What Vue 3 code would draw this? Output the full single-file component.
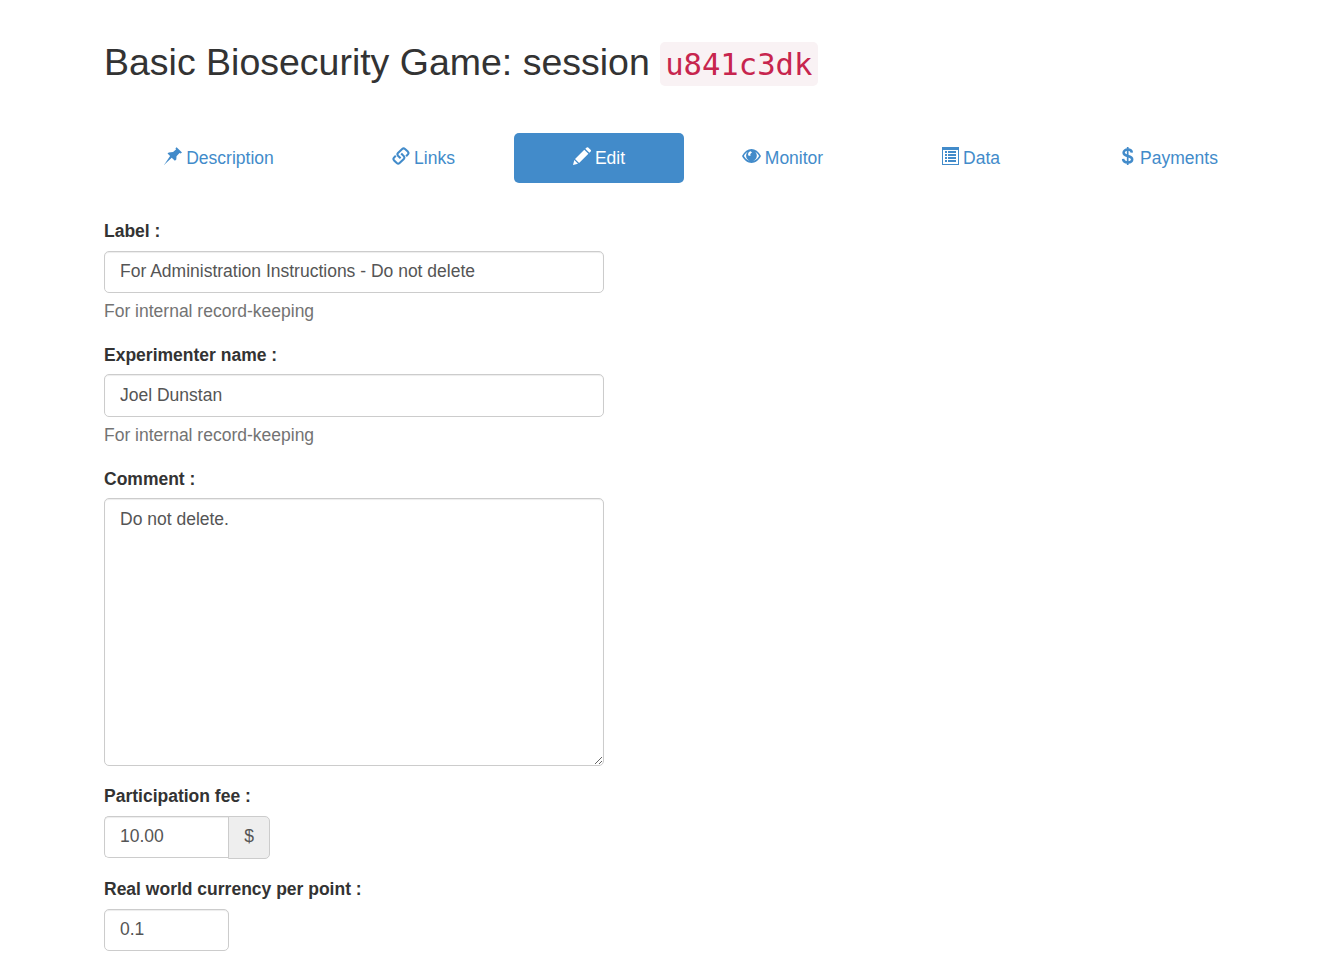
<script setup>
import { ref } from 'vue'

const label = ref('For Administration Instructions - Do not delete')
const experimenter = ref('Joel Dunstan')
const comment = ref('Do not delete.')
const fee = ref('10.00')
const rate = ref('0.1')
</script>

<template>
  <main class="container">
    <h2 class="title">Basic Biosecurity Game: session <code>u841c3dk</code></h2>

    <nav class="tabs">
      <a class="tab">
        <svg class="icon" viewBox="0 0 18 18"><path d="M12.6.2 18 5.4 16.6 6.5 15.5 6.1 12.5 9.3 12.3 12.6 10.9 13.7 7.7 10.8 0 18 6.1 9.1 3.5 6.6 4.8 5.4 9 5.1 12 2.4 11.5 1.3Z" /></svg>
        <span>Description</span>
      </a>
      <a class="tab">
        <svg class="icon line" viewBox="0 0 18 18"><path d="M8.6 11.3 6 8.7Q4.8 7.3 6 5.9L10.2 2Q11.6.8 13 2L15.8 4.6Q17.1 6 15.9 7.4L14.1 9.2" /><path d="M9.2 6.4 11.8 9.1Q13 10.6 11.8 12L7.6 16Q6.2 17.2 4.8 16L2.1 13.4Q.8 12 2 10.6L3.8 8.8" /></svg>
        <span>Links</span>
      </a>
      <a class="tab active">
        <svg class="icon" viewBox="0 0 18 18"><path d="M13.7.5Q14.4-.2 15.2.5L17.8 3Q18.4 3.8 17.7 4.5L16.4 5.8 12.3 1.8ZM11.3 2.8 15.4 6.8 6.1 15.9 2 11.9ZM1.3 13 5 16.7 0 18Z" /></svg>
        <span>Edit</span>
      </a>
      <a class="tab">
        <svg class="icon wide" viewBox="0 0 19 18"><path fill-rule="evenodd" d="M0 9C2.5 4.4 5.8 2.1 9.5 2.1S16.5 4.4 19 9C16.5 13.7 13.2 15.9 9.5 15.9S2.5 13.7 0 9ZM1.9 9C3.8 12.5 6.4 14.1 9.5 14.1S15.2 12.5 17.1 9C16.2 7.2 15 5.8 13.4 4.9A5.4 5.4 0 1 1 5.5 4.9C3.9 5.8 2.7 7.2 1.9 9ZM8.7 4.2C6.6 4.6 5.7 6.4 6.2 8.4L8.5 8.9C7.9 7.4 8.4 6.1 10 5.4Z" /></svg>
        <span>Monitor</span>
      </a>
      <a class="tab">
        <svg class="icon" viewBox="0 0 18 18"><path fill-rule="evenodd" d="M1 0H18V18H1ZM2 3V17H17V3Z" /><path d="M4 4H6V6H4ZM7 4H15V6H7ZM4 7H6V9H4ZM7 7H15V9H7ZM4 10H6V12H4ZM7 10H15V12H7ZM4 13H6V15H4ZM7 13H15V15H7Z" /></svg>
        <span>Data</span>
      </a>
      <a class="tab">
        <svg class="icon line dollar" viewBox="0 0 18 18"><path d="M13.9 5.6C13.6 3.6 12 2.6 9.8 2.6C7.3 2.6 5.6 3.8 5.6 5.7C5.6 7.6 7 8.2 9.8 9C12.7 9.8 14.2 10.5 14.2 12.3C14.2 14.3 12.4 15.5 9.8 15.5C7 15.5 5.2 14.3 5.1 11.9" /><path class="stem" d="M9.7 0V18" /></svg>
        <span>Payments</span>
      </a>
    </nav>

    <form>
      <div class="group">
        <label for="label">Label :</label>
        <input id="label" v-model="label" class="control">
        <p class="help">For internal record-keeping</p>
      </div>
      <div class="group">
        <label for="experimenter">Experimenter name :</label>
        <input id="experimenter" v-model="experimenter" class="control name">
        <p class="help">For internal record-keeping</p>
      </div>
      <div class="group">
        <label for="comment">Comment :</label>
        <textarea id="comment" v-model="comment" class="control"></textarea>
      </div>
      <div class="group">
        <label for="fee" class="fee-label">Participation fee :</label>
        <div class="input-group">
          <input id="fee" v-model="fee" class="control short joined">
          <span class="addon">$</span>
        </div>
      </div>
      <div class="group">
        <label for="rate">Real world currency per point :</label>
        <input id="rate" v-model="rate" class="control short">
      </div>
    </form>
  </main>
</template>

<style>
html, body {
  background: #fff;
  overflow: hidden;
}
</style>

<style scoped>
.container {
  box-sizing: border-box;
  width: 1279px;
  height: 977px;
  overflow: hidden;
  padding: 41px 0 0 104px;
  font: 17.5px/25px "Liberation Sans", Arial, sans-serif;
  color: #333;
}
.title {
  height: 45px;
  margin: 0 0 47px;
  font-size: 37.5px;
  font-weight: 400;
  line-height: 43px;
  letter-spacing: -0.01px;
  white-space: nowrap;
}
code {
  display: inline-block;
  padding: 1px 5.6px 0 5px;
  height: 43px;
  line-height: 43px;
  font-family: "DejaVu Sans Mono", monospace;
  font-size: 30.6px;
  color: #c7254e;
  background: #f9f2f4;
  border-radius: 5px;
}
.tabs {
  display: grid;
  grid-template-columns: 230px 179px 171px 197px 179px 216px;
  height: 50px;
  margin-bottom: 36px;
}
.tab {
  display: flex;
  align-items: center;
  justify-content: center;
  gap: 4px;
  color: #428bca;
  border-radius: 5px;
}
.tab.active {
  margin-left: 1px;
  color: #fff;
  background: #428bca;
}
.icon {
  width: 18px;
  height: 18px;
  margin-top: -4px;
  fill: currentColor;
}
.icon.wide { width: 19px; }
.icon.line {
  fill: none;
  stroke: currentColor;
  stroke-width: 2.1;
}
.icon.dollar { stroke-width: 2.5; }
.stem { stroke-width: 1.7; }
.group { margin-bottom: 18.75px; }
label {
  display: block;
  margin-bottom: 6.5px;
  font-weight: 700;
}
.fee-label {
  margin-top: -0.5px;
  margin-bottom: 7px;
}
.group:has(> textarea) { margin-bottom: 18.25px; }
.group:has(> .fee-label) { padding-top: 0.5px; }
.group > .fee-label { margin-top: -0.5px; }
.control {
  display: block;
  box-sizing: border-box;
  width: 500px;
  height: 42.5px;
  margin: 0;
  padding: 6px 15px 7.5px;
  font: inherit;
  color: #555;
  background: #fff;
  border: 1px solid #ccc;
  border-radius: 5px;
  outline: 0;
  box-shadow: inset 0 1px 1px rgba(0, 0, 0, 0.075);
}
.control.name { padding: 7px 15px 6.5px; }
textarea.control {
  height: 268px;
  padding-top: 8px;
  resize: both;
}
.help {
  margin: 6px 0 0;
  color: #737373;
}
.control.short { width: 125px; }
.input-group { display: flex; height: 42px; }
.control.joined {
  height: 42px;
  border-radius: 5px 0 0 5px;
  border-right: 0;
}
.addon {
  box-sizing: border-box;
  width: 42px;
  height: 42.5px;
  margin-left: -1px;
  line-height: 38px;
  text-align: center;
  color: #555;
  background: #eee;
  border: 1px solid #ccc;
  border-radius: 0 5px 5px 0;
}
</style>
